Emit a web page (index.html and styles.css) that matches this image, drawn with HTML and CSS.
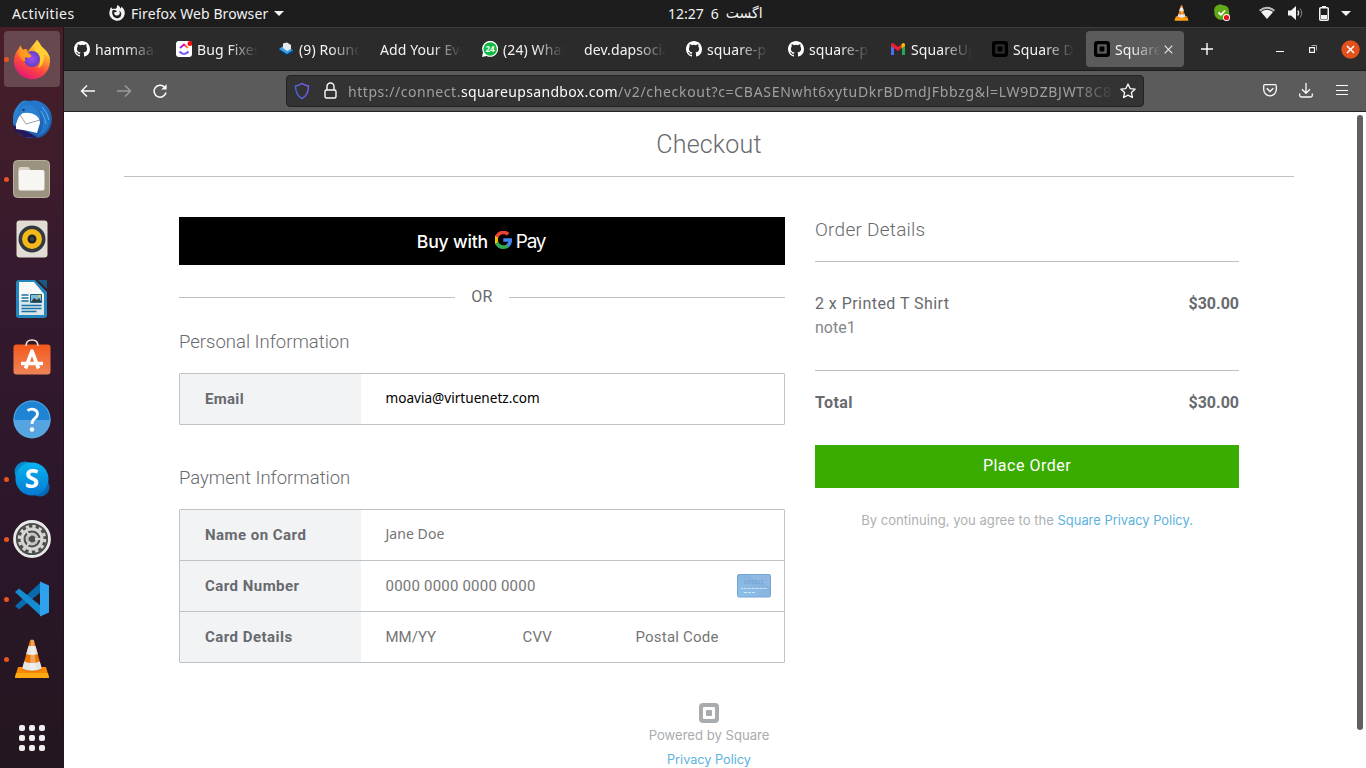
FILE: index.html
```html
<!DOCTYPE html>
<html lang="en">
<head>
<meta charset="utf-8">
<title>Checkout</title>
<link rel="stylesheet" href="styles.css">
</head>
<body>
<svg width="0" height="0" class="defs">
  <defs>
    <linearGradient id="ff" x1="0.8" y1="0" x2="0.3" y2="1"><stop offset="0" stop-color="#fff44f"/><stop offset=".35" stop-color="#ffa52b"/><stop offset=".65" stop-color="#ff4a3d"/><stop offset="1" stop-color="#e0157b"/></linearGradient>
    <radialGradient id="fp"><stop offset="0" stop-color="#a04cf5"/><stop offset="1" stop-color="#6042c4"/></radialGradient>
    <linearGradient id="tb" x1="0" y1="0" x2="1" y2="1"><stop offset="0" stop-color="#2f8fe0"/><stop offset="1" stop-color="#1b4f9c"/></linearGradient>
    <linearGradient id="store" x1="0" y1="0" x2="0" y2="1"><stop offset="0" stop-color="#f4591d"/><stop offset="1" stop-color="#ef8356"/></linearGradient>
    <linearGradient id="sk" x1="0" y1="0" x2="0" y2="1"><stop offset="0" stop-color="#08b4ee"/><stop offset="1" stop-color="#0579d4"/></linearGradient>
    <linearGradient id="cc" x1="0" y1="1" x2="1" y2="0"><stop offset="0" stop-color="#8ac2ea"/><stop offset="1" stop-color="#86abd9"/></linearGradient>
    <linearGradient id="shield" x1="1" y1="0" x2="0" y2="1"><stop offset="0" stop-color="#8d5cf0"/><stop offset="1" stop-color="#3565df"/></linearGradient>
    <linearGradient id="cu" x1="0" y1="0" x2="1" y2="0"><stop offset="0" stop-color="#8930fd"/><stop offset=".5" stop-color="#ff02a8"/><stop offset="1" stop-color="#ffb000"/></linearGradient>
  </defs>
  <symbol id="github" viewBox="0 0 16 16"><path fill="#fff" fill-rule="evenodd" d="M8 0C3.58 0 0 3.58 0 8c0 3.54 2.29 6.53 5.47 7.59.4.07.55-.17.55-.38 0-.19-.01-.82-.01-1.49-2.01.37-2.53-.49-2.69-.94-.09-.23-.48-.94-.82-1.13-.28-.15-.68-.52-.01-.53.63-.01 1.08.58 1.23.82.72 1.21 1.87.87 2.33.66.07-.52.28-.87.51-1.07-1.78-.2-3.64-.89-3.64-3.95 0-.87.31-1.59.82-2.15-.08-.2-.36-1.02.08-2.12 0 0 .67-.21 2.2.82a7.6 7.6 0 0 1 4 0c1.53-1.04 2.2-.82 2.2-.82.44 1.1.16 1.92.08 2.12.51.56.82 1.27.82 2.15 0 3.07-1.87 3.75-3.65 3.95.29.25.54.73.54 1.48 0 1.07-.01 1.93-.01 2.2 0 .21.15.46.55.38A8.01 8.01 0 0 0 16 8c0-4.42-3.58-8-8-8z"/></symbol>
  <symbol id="square" viewBox="0 0 20 20"><path fill="currentColor" fill-rule="evenodd" d="M4 0h12a4 4 0 0 1 4 4v12a4 4 0 0 1-4 4H4a4 4 0 0 1-4-4V4a4 4 0 0 1 4-4zm.9 4a.9.9 0 0 0-.9.9v10.2c0 .5.4.9.9.9h10.2c.5 0 .9-.4.9-.9V4.900a.9.9 0 0 0-.9-.9zM7.700 7h4.600c.4 0 .7.3.7.7v4.600c0 .4-.3.7-.7.7H7.700a.7.7 0 0 1-.7-.7V7.700c0-.4.3-.7.7-.7z"/></symbol>
  <symbol id="cone" viewBox="0 0 36 40"><path fill="#f68b00" d="M4 28h28l3 10.500H1z"/><path fill="#ffa811" d="M2 34h32l1 5H1z"/><path fill="#e87504" d="M16 1.500q2-2 4 0l8 29q-10 5-20 0z"/><path fill="#e5e5e5" d="M14.500 7h7l2.300 8q-5.800 2-11.600 0zM10.200 22.500q7.800 3 15.600 0l2 7q-9.800 4.500-19.600 0z"/><path fill="#fff" opacity=".35" d="M17 1h3l2 30h-6z"/></symbol>
</svg>

<header class="topbar">
  <span class="activities">Activities</span>
  <span class="appmenu">
    <svg width="16" height="16" viewBox="0 0 16 16"><path fill="#f2f2f2" d="M8.500 0c2 1 2.600 2.200 2.700 3.500 1-.5 1.200-1.200 1.100-1.900C15 3.800 16 6.300 15.700 9A7.700 7.700 0 1 1 .8 5.500C1 4 1.700 2.800 2.500 2.200l.6 1.900C4 3.600 5 3.500 6 3.800 7.500 4 7.600 3 8.500 0z"/><path fill="#1d1d1d" d="M3.400 5.500c1.500-.8 2.600-.4 4.800.8-.8 1-2.600.8-3.200 1.400.2 2 1.700 3 3.300 2.800 2.400-.3 3.300-2.700 1.700-5 2.500 1.300 3 4.500 1.200 6.400-2 2-5.600 1.500-7-.8-1-1.600-1.300-3.600-.8-5.600z"/></svg>
    <span class="appname">Firefox Web Browser</span><i class="caret"></i>
  </span>
  <span class="clock" dir="ltr"><span>12:27</span><span>6</span><span lang="ur" class="month">اگست</span></span>
  <span class="tray">
    <svg class="t-vlc" width="15" height="16"><use href="#cone"/></svg>
    <svg class="t-sk" width="18" height="18" viewBox="0 0 18 18"><path fill="#62a918" d="M5 1c2-1 4-.2 5 .2 5 .3 6.500 4 6 7.500C18 14 14 17 10 15.800 4 16.500.8 12 1.500 8 .5 5 2 2 5 1z"/><path d="M5.500 8.500l2.500 2.300 4-4.300" stroke="#fff" stroke-width="1.800" fill="none"/><circle cx="13.500" cy="13.500" r="3.500" fill="#fff"/><circle cx="13.500" cy="13.500" r="2.600" fill="#e81123"/></svg>
    <svg class="t-wifi" width="16" height="14" viewBox="0 0 16 14"><path fill="#f2f2f2" opacity=".75" d="M0 4Q8-2.500 16 4l-1.300 1.500Q8 0 1.300 5.500z"/><path fill="#f2f2f2" d="M2 6q6-4.500 12 0l-6 7z"/></svg>
    <svg class="t-vol" width="15" height="14" viewBox="0 0 15 14"><path fill="#f2f2f2" d="M0 4.500h3L8 0v14L3 9.500H0z"/><path d="M9.700 4.500q2 2.500 0 5" stroke="#ddd" stroke-width="1.300" fill="none"/><path d="M12 2.500q3.500 4.500 0 9" stroke="#888" fill="none"/></svg>
    <svg class="t-bat" width="10" height="15" viewBox="0 0 10 15"><path fill="#f2f2f2" d="M3 0h4v2H3z"/><rect x=".75" y="1.750" width="8.500" height="12.500" rx="1" fill="none" stroke="#f2f2f2" stroke-width="1.500"/><path fill="#f2f2f2" d="M2 9h6v4H2z"/></svg>
    <i class="caret"></i>
  </span>
</header>

<div class="desktop">
  <nav class="dock">
    <div class="app on run"><svg width="38" height="38" viewBox="0 0 38 38"><path fill="url(#ff)" d="M24 0c2 2 3 4 4.500 6.500l2 2c3.500 3 6.500 8 6.500 13A18 18 0 0 1 1 21c0-5 1.500-8 4.500-12L7 6l2 4 3.500-1 1 4z"/><path fill="#ffcf35" d="M24 0c2 3 3 4 4.500 6.500C34 11 37 15 37 21c-1-4-3-6-6-7 1 9-3 13-6 14 6-10-2-13-3-16-1-4 0-8 2-12z"/><circle cx="19" cy="19" r="8" fill="url(#fp)"/><path fill="#ff8a24" d="M5 11c5-2 8-1 13 4 0 2-5 1-6 3 0 1 0 2 1 3-4 1-7-3-8-10z"/><path fill="#ff9d20" d="M7 5l3 5 4-1 1 5 4 2-3 2-8-2z"/></svg></div>
    <div class="app"><svg width="40" height="40" viewBox="0 0 40 40"><path fill="url(#tb)" d="M8 4C11 1 14 1 17 2c12-3 23 6 23 18S31 40 22 39C9 40 0 31 1 20c0-7 2-10 7-16z"/><path fill="#27185c" d="M1 26l2 6 9 6 14 1-8-5z"/><path fill="#fff" d="M4 25C6 21 5 18 11 14q9-3 16 2l1 8-3 10Q14 31 4 30z"/><path d="M8 16l6 9 14-4" fill="none" stroke="#999fac"/><path fill="#2277cc" d="M8 14C7 8 13 5 19 6c7 1 11 7 12 14 0 8-1 13-6 17 13-3 15-16 11-24C30 3 22 2 16 2 9 4 4 9 8 14z"/><path fill="#2b7fd0" d="M8 14C8 8 15 5 21 8c5 3 8 8 7 14-2-6-8-9-17-8z"/><path d="M30 8q6 6 7 13M29 12q4 6 5 13" stroke="#59abe8" fill="none"/><circle cx="11.500" cy="11" r="1.200" fill="#143a70"/></svg></div>
    <div class="app run"><svg width="37" height="38" viewBox="0 0 37 38"><rect x=".5" y=".5" width="36" height="37" rx="4" fill="#9b937f" stroke="#b8b19f"/><path fill="#d9d3c5" d="M5.500 9q0-2 2-2h8l2 3h10v6h-22z"/><rect x="5.500" y="10" width="26" height="20.500" rx="2" fill="#f7f6f3"/></svg></div>
    <div class="app"><svg width="32" height="38" viewBox="0 0 32 38"><rect x=".5" y=".5" width="31" height="37" rx="3" fill="#e2ddd4"/><circle cx="16" cy="19" r="13.500" fill="#34393d"/><circle cx="16" cy="19" r="10" fill="#f3b918"/><circle cx="16" cy="19" r="4.500" fill="#202427"/><circle cx="16" cy="19" r="2" fill="#3b4044"/></svg></div>
    <div class="app"><svg width="31" height="38" viewBox="0 0 31 38"><path fill="#2386bd" d="M3 0h16l12 12v23q0 3-3 3H3q-3 0-3-3V3q0-3 3-3z"/><path fill="#185a84" d="M22 0h8q1 0 1 1v8z"/><path fill="#f8f8f8" d="M3 2h15l10 12v21H3z"/><path fill="#d9e6ec" d="M3 20h25v15H3z"/><path d="M5.500 15h7M5.500 18h7M5.500 21h7M5.500 25.500h20M5.500 28.500h20M5.500 31.500h15" stroke="#1b719f" stroke-width="1.500"/><path fill="#7dbbd8" stroke="#1b6288" d="M14.500 14.500h11v8h-11z"/><path fill="#303d42" d="M15 22l3-4 3 2 2-2 2.500 4z"/><circle cx="23.500" cy="16" r="1.300" fill="#efcf2d"/></svg></div>
    <div class="app"><svg class="up" width="38" height="36" viewBox="0 0 38 36"><rect x=".5" y="5.500" width="37" height="30" rx="3" fill="url(#store)"/><path d="M13 7q0-6 6-6t6 6" fill="none" stroke="#eee2c9" stroke-width="1.500"/><path d="M12.500 29.500L19 12l6.500 17.500M8 24.500h22" fill="none" stroke="#fff" stroke-width="3.600" stroke-linejoin="round"/></svg></div>
    <div class="app"><svg width="38" height="38" viewBox="0 0 38 38"><circle cx="19" cy="19" r="18.500" fill="#1f84d4"/><path fill="#56a5e2" d="M.5 20h37a18.500 18.500 0 0 1-37 0z"/><circle cx="19" cy="19" r="18" fill="none" stroke="#58a9e4"/><path d="M14.500 10.500c5-3 10-.5 10 3.500 0 4.500-5.500 4-5.500 10" fill="none" stroke="#fff" stroke-width="2.800"/><circle cx="19" cy="29.500" r="2.200" fill="#fff"/></svg></div>
    <div class="app run"><svg width="36" height="36" viewBox="0 0 36 36"><circle cx="11" cy="11" r="10.500" fill="#0787c7"/><circle cx="26" cy="26" r="9.500" fill="#0669b4"/><circle cx="18" cy="18" r="16.500" fill="url(#sk)"/><text x="18" y="27" class="sk">S</text></svg></div>
    <div class="app run"><svg width="38" height="38" viewBox="0 0 38 38"><circle cx="19" cy="19" r="17.500" fill="#4e4e4c" stroke="#e9e9e7" stroke-width="2.800"/><circle cx="19" cy="19" r="12.700" fill="none" stroke="#d6d6d4" stroke-width="3" stroke-dasharray="3.300 3.350"/><circle cx="19" cy="19" r="10" fill="none" stroke="#d6d6d4" stroke-width="3"/><circle cx="19" cy="19" r="5" fill="none" stroke="#c6c6c4" stroke-width="3"/><path d="M14 12l3 4.500M14 26l3-4.500M22 19h6" stroke="#d6d6d4" stroke-width="2"/></svg></div>
    <div class="app run"><svg width="36" height="36" viewBox="0 0 36 36"><path fill="#0869ac" d="M1 25l4 3.500L27 11V1z"/><path fill="#168bd2" d="M1 11l4-3.500L27 25v10z"/><path fill="#2ca2ef" d="M26 .5l9 4v27l-9 4z"/></svg></div>
    <div class="app run"><svg width="36" height="40"><use href="#cone"/></svg></div>
    <div class="grid"><i></i><i></i><i></i><i></i><i></i><i></i><i></i><i></i><i></i></div>
  </nav>

  <main class="window">
    <div class="tabs">
      <div class="tab"><svg><use href="#github"/></svg><span>hammaad</span></div>
      <div class="tab"><svg viewBox="0 0 16 16"><rect y="0" width="16" height="16" rx="3" fill="#fff"/><path d="M4 7l4-3.500L12 7" stroke="url(#cu)" stroke-width="2" fill="none"/><path d="M3.500 10.500q4.500 5 9 0" stroke="#7b5cf5" stroke-width="2.200" fill="none"/><circle cx="14" cy="2.500" r="2.500" fill="#f01010"/></svg><span>Bug Fixes</span></div>
      <div class="tab"><svg viewBox="0 0 16 16"><path fill="#0b3d70" d="M1 9l7 5.500 7-2.500V8z"/><path fill="#35a0e8" d="M1 8l4-3 10 4-6 4z"/><path fill="#e7eaed" d="M5 2.500l4-1 4 2.500v4l-4 2-4-3z"/></svg><span>(9) Round</span></div>
      <div class="tab"><span>Add Your Eve</span></div>
      <div class="tab"><svg viewBox="0 0 16 16"><path fill="#fff" d="M0 16l1-4.500A8 8 0 1 1 4.500 15z"/><circle cx="8.200" cy="8" r="6.800" fill="#10b943"/><text x="8" y="11" class="badge">24</text></svg><span>(24) What</span></div>
      <div class="tab"><span>dev.dapsocial</span></div>
      <div class="tab"><svg><use href="#github"/></svg><span>square-p</span></div>
      <div class="tab"><svg><use href="#github"/></svg><span>square-p</span></div>
      <div class="tab"><svg viewBox="0 0 16 16"><path fill="#4f6bf0" d="M1 4l3 2v8H1z"/><path fill="#2aa84d" d="M12 6l3-2v10h-3z"/><path fill="#e8202e" d="M1 3q1.500-2 3.500 0L8 6l3.500-3v4L8 10 1 5z"/><path fill="#fbbc04" d="M11.500 3Q14 1 15 3.500V5l-3.500 2.500z"/></svg><span>SquareUp</span></div>
      <div class="tab"><svg class="sq"><use href="#square"/></svg><span>Square D</span></div>
      <div class="tab active"><svg class="sq"><use href="#square"/></svg><span>Square</span><svg class="x" viewBox="0 0 9 9"><path d="M.7.7l7.600 7.600M8.300.7L.7 8.300" stroke="#eee" stroke-width="1.100"/></svg></div>
      <svg class="plus" viewBox="0 0 12 12"><path d="M6 0v12M0 6h12" stroke="#fff" stroke-width="1.400"/></svg>
      <div class="controls">
        <svg width="8" height="10" viewBox="0 0 8 10"><path d="M0 7.500h8" stroke="#fff"/></svg>
        <svg width="8" height="8" viewBox="0 0 8 8"><path d="M.6 2.600h4.800v4.800H.6z" fill="none" stroke="#fff" stroke-width="1.100"/><path d="M2.500.5h5v5" fill="none" stroke="#aaa"/></svg>
        <svg width="19" height="19" viewBox="0 0 19 19"><circle cx="9.500" cy="9.500" r="9.200" fill="#e2501c"/><path d="M6 6l7 7M13 6l-7 7" stroke="#fff" stroke-width="1.500"/></svg>
      </div>
    </div>

    <div class="toolbar">
      <svg class="nav" viewBox="0 0 16 14"><path d="M15 7H1.500M7 1.500L1.500 7 7 12.500" fill="none" stroke="#fbfbfb" stroke-width="1.400"/></svg>
      <svg class="nav dim" viewBox="0 0 16 14"><path d="M1 7h13.500M9 1.500L14.500 7 9 12.500" fill="none" stroke="#fbfbfb" stroke-width="1.400"/></svg>
      <svg class="nav" viewBox="0 0 16 14"><path d="M14 8.500A6 6 0 1 1 12.500 3" fill="none" stroke="#fbfbfb" stroke-width="1.500"/><path d="M14.600.2v5.300H9.300z" fill="#fbfbfb"/></svg>
      <div class="url">
        <svg width="16" height="18" viewBox="0 0 16 18"><path d="M8 1.500c2 1.400 4 2.200 6.500 2.500 0 5.500-1.500 10-6.500 12.500C3 14 1.500 9.500 1.500 4 4 3.700 6 2.900 8 1.500z" fill="none" stroke="url(#shield)" stroke-width="1.400"/></svg>
        <svg class="lock" width="13" height="17" viewBox="0 0 13 17"><path d="M3 8V4.500a3.500 3.500 0 0 1 7 0V8" fill="none" stroke="#fbfbfb" stroke-width="1.400"/><rect x="1" y="8" width="11" height="8" rx="1.500" fill="none" stroke="#fbfbfb" stroke-width="1.400"/></svg>
        <span class="addr"><span class="a1">https://connect.</span><span class="a2">squareupsandbox.com</span><span class="a3">/v2/checkout?c=CBASENwht6xytuDkrBDmdJFbbzg&amp;l=LW9DZBJWT8C8</span></span>
        <svg width="16" height="16" viewBox="0 0 16 16"><path d="M8 1l2.100 4.600 5 .6-3.700 3.400 1 4.900L8 12.100l-4.400 2.400 1-4.900L.9 6.200l5-.6z" fill="none" stroke="#fbfbfb" stroke-width="1.300" stroke-linejoin="round"/></svg>
      </div>
      <div class="tools">
        <svg width="14" height="13" viewBox="0 0 14 13"><path d="M2 .7h10q1.300 0 1.300 1.300v3.500a6.300 6.300 0 0 1-12.600 0V2Q.7.700 2 .7z" fill="none" stroke="#fbfbfb" stroke-width="1.300"/><path d="M3.800 4.300L7 7.500l3.200-3.200" fill="none" stroke="#fbfbfb" stroke-width="1.500"/></svg>
        <svg width="14" height="15" viewBox="0 0 14 15"><path d="M7 0v10M3 6.300l4 4 4-4M.7 10.500v2q0 1.500 1.500 1.500h9.600q1.500 0 1.500-1.500v-2" fill="none" stroke="#fbfbfb" stroke-width="1.300"/></svg>
        <svg width="12" height="11" viewBox="0 0 12 11"><path d="M0 .5h12M0 5.500h12M0 9.500h12" stroke="#fbfbfb" stroke-width="1.200"/></svg>
      </div>
    </div>

    <div class="viewport">
      <div class="page">
        <h1>Checkout</h1>
        <div class="cols">
          <section class="left">
            <div class="gpay"><span>Buy with</span><svg width="17" height="18" viewBox="2 2 20.500 20.500"><path fill="#4285f4" d="M22.560 12.250c0-.78-.07-1.530-.2-2.250H12v4.260h5.920a5.060 5.060 0 0 1-2.200 3.320v2.770h3.570c2.080-1.920 3.270-4.740 3.270-8.100z"/><path fill="#34a853" d="M12 23c2.970 0 5.460-.98 7.280-2.660l-3.570-2.770c-.98.660-2.230 1.060-3.710 1.060-2.860 0-5.290-1.930-6.160-4.530H2.180v2.840A11 11 0 0 0 12 23z"/><path fill="#fbbc05" d="M5.840 14.090a6.600 6.600 0 0 1 0-4.180V7.070H2.180a11 11 0 0 0 0 9.860z"/><path fill="#ea4335" d="M12 5.380c1.620 0 3.060.56 4.210 1.640l3.150-3.150A10.600 10.600 0 0 0 12 1 11 11 0 0 0 2.180 7.070l3.660 2.840C6.710 7.310 9.140 5.380 12 5.380z"/></svg><span class="pay">Pay</span></div>
            <div class="or"><span>OR</span></div>
            <h2>Personal Information</h2>
            <div class="form"><div class="row"><b class="l-email">Email</b><div><span class="email">moavia@virtuenetz.com</span></div></div></div>
            <h2 class="second">Payment Information</h2>
            <div class="form">
              <div class="row"><b>Name on Card</b><div><span class="jane">Jane Doe</span></div></div>
              <div class="row"><b>Card Number</b><div><span>0000 0000 0000 0000</span><svg class="card" width="34" height="24" viewBox="0 0 34 24"><rect x=".5" y=".5" width="33" height="22.500" rx="1.500" fill="url(#cc)" stroke="#76a5d4"/><path fill="#9cc6ec" opacity=".4" d="M10 1h23v12z"/><text x="17" y="9.500" class="credit">CREDIT</text><path d="M4 14.500h26" stroke="#e8f3fb" stroke-width="1.200" stroke-dasharray="2 .7" opacity=".8"/><path d="M7 18.500h11" stroke="#e8f3fb" stroke-dasharray="3 1" opacity=".8"/></svg></div></div>
              <div class="row"><b>Card Details</b><div><span class="mm">MM/YY</span><span class="cvv">CVV</span><span>Postal Code</span></div></div>
            </div>
          </section>
          <aside class="right">
            <h2>Order Details</h2>
            <div class="item"><div>2 x Printed T Shirt<br><span class="note">note1</span></div><b>$30.00</b></div>
            <div class="total"><b>Total</b><b>$30.00</b></div>
            <button>Place Order</button>
            <p>By continuing, you agree to the <a>Square Privacy Policy.</a></p>
          </aside>
        </div>
        <footer><svg width="20" height="20"><use href="#square"/></svg><span>Powered by Square</span><a>Privacy Policy</a></footer>
      </div>
      <div class="scroll"><i></i></div>
    </div>
  </main>
</div>
</body>
</html>
```
FILE: styles.css
```css
* { box-sizing: border-box; }
body { margin: 0; width: 1366px; height: 768px; overflow: hidden; font-family: "Noto Sans", sans-serif; font-size: 14px; background: #fff; }
.defs { position: absolute; }
svg { display: block; flex: none; }
h1, h2, p { margin: 0; font-weight: 300; }

/* system bar */
.topbar { height: 27px; padding-bottom: 1px; background: #1d1d1d; color: #f2f2f2; display: grid; grid-template-columns: 1fr 94px 1fr; align-items: center; grid-template-areas: "l c r"; white-space: nowrap; }
.activities { grid-area: l; padding-left: 12px; letter-spacing: .42px; }
.appmenu { grid-area: l; padding-left: 109px; display: flex; align-items: center; gap: 6px; }
.appname { letter-spacing: .1px; }
.caret { border: 5px solid transparent; border-top-color: #f2f2f2; border-bottom: 0; }
.clock { grid-area: c; display: flex; align-items: center; margin-left: 32px; }
.clock span + span { margin-left: 7px; }
.clock .month { font-family: "DejaVu Sans", sans-serif; font-size: 14px; }
.tray { grid-area: r; display: flex; align-items: center; justify-content: flex-end; padding-right: 15px; }
.t-sk { margin-left: 24px; }
.t-wifi { margin-left: 28px; }
.t-vol { margin-left: 13px; }
.t-bat { margin: 0 12px 0 16px; }

.desktop { display: flex; height: 741px; }
.dock { width: 64px; background: linear-gradient(#481f28, #371a2d 30%, #2d172b 60%, #231620); display: flex; flex-direction: column; align-items: stretch; padding-top: 2px; border-right: 1px solid #21141f; }
.app { height: 60px; display: flex; align-items: center; justify-content: center; position: relative; padding-left: 0; flex: none; }
.app.on::before { content: ""; position: absolute; left: 4px; top: 2px; width: 56px; height: 56px; border-radius: 4px; background: #68484f; }
.app svg { position: relative; overflow: visible; }
.app .up { margin-top: -4px; }
.app.run::after { content: ""; position: absolute; left: 4px; top: 28px; width: 5px; height: 5px; border-radius: 50%; background: #e95420; }
.sk { font: 700 26px "Open Sans", sans-serif; fill: #fff; text-anchor: middle; }
.grid { display: grid; grid-template-columns: repeat(3, 6px); gap: 4px; margin: 36px 0 0 19px; }
.grid i { height: 6px; background: #eee; border-radius: 2px; }

/* browser chrome */
.window { width: 1302px; display: flex; flex-direction: column; }
.tabs { height: 44px; flex: none; background: #2b2b2b; border-top: 1px solid #3b3b3b; border-bottom: 1px solid #1b1b1b; display: flex; align-items: center; padding-left: 2px; color: #f4f4f4; }
.tab { width: 98px; margin-right: 4px; height: 36px; padding: 0 8px; display: flex; align-items: center; gap: 5px; flex: none; border-radius: 4px; }
.tab svg { width: 16px; height: 16px; }
.tab span { overflow: hidden; white-space: nowrap; flex: 1; letter-spacing: .1px; -webkit-mask-image: linear-gradient(90deg, #000 calc(100% - 30px), transparent); mask-image: linear-gradient(90deg, #000 calc(100% - 30px), transparent); }
.tab .sq { color: #000; }
.tab.active { background: #5b5b5b; }
.tab.active .x { width: 9px; height: 9px; margin: 0 3px 0 -2px; }
.badge { font: 700 8px "Open Sans", sans-serif; fill: #fff; text-anchor: middle; }
.plus { width: 12px; height: 12px; margin-left: 13px; }
.controls { display: flex; align-items: center; margin-left: 63px; gap: 26px; }
.controls svg:last-child { margin-left: -1px; }
.controls svg { margin-right: -1px; }
.toolbar { height: 41px; flex: none; background: #5b5b5b; border-bottom: 1px solid #242424; display: flex; align-items: center; padding-left: 16px; }
.nav { width: 16px; height: 14px; margin-right: 20px; }
.dim { opacity: .4; }
.url { width: 858px; height: 32px; margin-left: 98px; background: #333; border: 1px solid #222; border-radius: 4px; display: flex; align-items: center; padding-left: 7px; }
.lock { margin: 0 11px 2px 14px; }
.addr { width: 767px; margin-right: 5px; overflow: hidden; white-space: nowrap; color: #a0a0a0; -webkit-mask-image: linear-gradient(90deg, #000 calc(100% - 40px), transparent); mask-image: linear-gradient(90deg, #000 calc(100% - 40px), transparent); }
.a1 { letter-spacing: .55px; }
.a2 { letter-spacing: .34px; color: #fbfbfb; }
.a3 { letter-spacing: .69px; }
.tools { display: flex; align-items: center; gap: 22px; margin-left: 119px; padding-bottom: 1px; }
.tools svg:last-child { margin-left: 1px; }

/* checkout page */
.viewport { flex: 1; min-height: 0; display: flex; overflow: hidden; background: #fff; }
.page { width: 1290px; padding: 0 60px; font-family: Roboto, sans-serif; font-size: 16px; color: #686a6e; }
h1 { height: 65px; line-height: 65px; border-bottom: 1px solid #c1c1c3; text-align: center; font-size: 25px; letter-spacing: .2px; }
h2 { font-size: 18.500px; line-height: 24px; padding-top: 1px; height: 24px; }
.cols { display: flex; gap: 30px; padding: 40px 55px 0; }
.left { width: 606px; }
.gpay { height: 48px; background: #000; color: #fff; display: flex; align-items: center; justify-content: center; font: 500 17.600px Inter, sans-serif; letter-spacing: -.2px; padding: 0 2px 0 0; }
.gpay svg { margin: -3px 4px 0 7px; }
.pay { font-weight: 400; font-size: 19px; letter-spacing: -1.300px; }
.or { display: flex; align-items: center; justify-content: center; height: 64px; letter-spacing: .2px; }
.or::before, .or::after { content: ""; flex: 1; height: 1px; background: #c1c1c3; margin-top: 1px; }
.or span { width: 54px; text-align: center; padding-bottom: 2px; }
.form { margin-top: 20px; border: 1px solid #bfc3c8; border-radius: 1px; font-size: 15px; }
.row { display: flex; height: 51px; border-bottom: 1px solid #bfc3c8; }
.row:last-child { border: 0; height: 50px; }
.row b { width: 181px; padding-left: 25px; background: #f2f3f5; line-height: 50px; letter-spacing: .47px; }
.row div { flex: 1; display: flex; align-items: center; padding: 0 13px 0 24.500px; letter-spacing: .21px; color: #757575; }
.row .l-email { letter-spacing: .3px; }
.email { font-family: "Noto Sans", sans-serif; font-size: 13.600px; letter-spacing: 0; color: #000; margin-top: -3px; }
.jane { font-family: "Noto Sans", sans-serif; font-size: 14px; letter-spacing: .05px; margin-top: -3px; }
.card { margin-left: auto; }
.credit { font: 700 5px Roboto, sans-serif; fill: #75a6d6; text-anchor: middle; letter-spacing: .5px; }
.mm { width: 137px; letter-spacing: 0; }
.cvv { width: 113px; }
.second { margin-top: 40px; }
.right { width: 424px; }
.right h2 { height: 45px; border-bottom: 1px solid #c1c1c3; font-size: 19px; letter-spacing: .25px; }
.item { display: flex; justify-content: space-between; height: 109px; padding-top: 30px; border-bottom: 1px solid #c1c1c3; line-height: 24px; letter-spacing: .45px; }
.item b, .total b:last-child { letter-spacing: 0; }
.note { color: #85878b; letter-spacing: 0; }
.total { display: flex; justify-content: space-between; line-height: 24px; padding-top: 20px; height: 74px; letter-spacing: .4px; }
button { display: block; width: 424px; height: 43px; border: 0; padding: 0 0 2px; background: #3aac00; color: #fff; font: 400 16px Roboto, sans-serif; letter-spacing: .5px; }
.right p { font: 13.100px/20px Inter, sans-serif; color: #adb0b3; text-align: center; margin-top: 22px; white-space: nowrap; }
a { color: #5cb2dd; }
.right p a { font-size: 12.900px; }
footer { display: flex; flex-direction: column; align-items: center; font: 13.100px/24px Inter, sans-serif; color: #a9acaf; margin-top: 40px; }
footer a { font-size: 12.700px; padding-top: 1px; }
.scroll { width: 12px; padding: 3px 0 0 3px; }
.scroll i { display: block; width: 6px; height: 615px; background: #606060; border-radius: 3px; }
```
